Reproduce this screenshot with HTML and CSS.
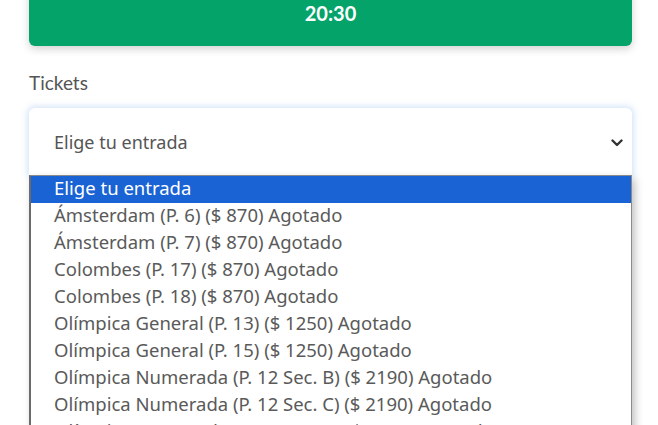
FILE: index.html
```html
<!DOCTYPE html>
<html lang="es">
<head>
<meta charset="utf-8">
<link rel="stylesheet" href="styles.css">
</head>
<body>
<div class="page">
  <div class="time-btn">20:30</div>
  <label class="label">Tickets</label>
  <div class="select">
    <span class="select-value">Elige tu entrada</span>
    <svg class="chev" width="12" height="8" viewBox="0 0 12 8"><path d="M1.5 1.5 L6 6 L10.5 1.5" fill="none" stroke="#333" stroke-width="2.4" stroke-linecap="round" stroke-linejoin="round"/></svg>
  </div>
  <ul class="options">
    <li class="opt active">Elige tu entrada</li>
    <li class="opt">Ámsterdam (P. 6) ($ 870) Agotado</li>
    <li class="opt">Ámsterdam (P. 7) ($ 870) Agotado</li>
    <li class="opt">Colombes (P. 17) ($ 870) Agotado</li>
    <li class="opt">Colombes (P. 18) ($ 870) Agotado</li>
    <li class="opt">Olímpica General (P. 13) ($ 1250) Agotado</li>
    <li class="opt">Olímpica General (P. 15) ($ 1250) Agotado</li>
    <li class="opt">Olímpica Numerada (P. 12 Sec. B) ($ 2190) Agotado</li>
    <li class="opt">Olímpica Numerada (P. 12 Sec. C) ($ 2190) Agotado</li>
    <li class="opt">Olímpica Numerada (P. 12 Sec. D) ($ 2190) Agotado</li>
  </ul>
</div>
</body>
</html>
```
FILE: styles.css
```css
html, body {
  margin: 0;
  padding: 0;
  background: #fff;
  overflow: hidden;
}
.page {
  padding: 0 26px 0 29px;
  font-family: "Noto Sans", "Open Sans", sans-serif;
  color: #555;
}
.time-btn {
  margin-top: -20px;
  height: 66px;
  background: #03a36a;
  border-radius: 6px;
  color: #fff;
  font-family: Lato, "Open Sans", sans-serif;
  font-weight: 700;
  font-size: 20px;
  display: flex;
  align-items: center;
  justify-content: center;
  box-shadow: 0 3px 8px rgba(0, 0, 0, 0.18);
}
.label {
  display: block;
  margin-top: 25px;
  font-family: Lato, "Open Sans", sans-serif;
  font-size: 19px;
  line-height: 24px;
  color: #555;
}
.select {
  margin-top: 13px;
  height: 67px;
  border-radius: 6px 6px 0 0;
  background: #fff;
  box-shadow: 0 0 6px 2px rgba(120, 170, 230, 0.3);
  display: flex;
  align-items: center;
  justify-content: space-between;
  padding: 0 9px 0 25px;
  font-size: 18px;
  color: #555;
}
.chev {
  margin-top: 2px;
}
.options {
  list-style: none;
  margin: 0;
  padding: 0;
  border: 1px solid #8a8a8a;
  border-left: 2px solid #6b6b6b;
  background: #fff;
  box-shadow: 3px 4px 8px rgba(0, 0, 0, 0.25);
  font-size: 18.5px;
}
.opt {
  height: 27px;
  line-height: 24px;
  padding-left: 23px;
  color: #5a5a5a;
  white-space: nowrap;
}
.opt.active {
  background: #1a63d4;
  color: #fff;
}
```
